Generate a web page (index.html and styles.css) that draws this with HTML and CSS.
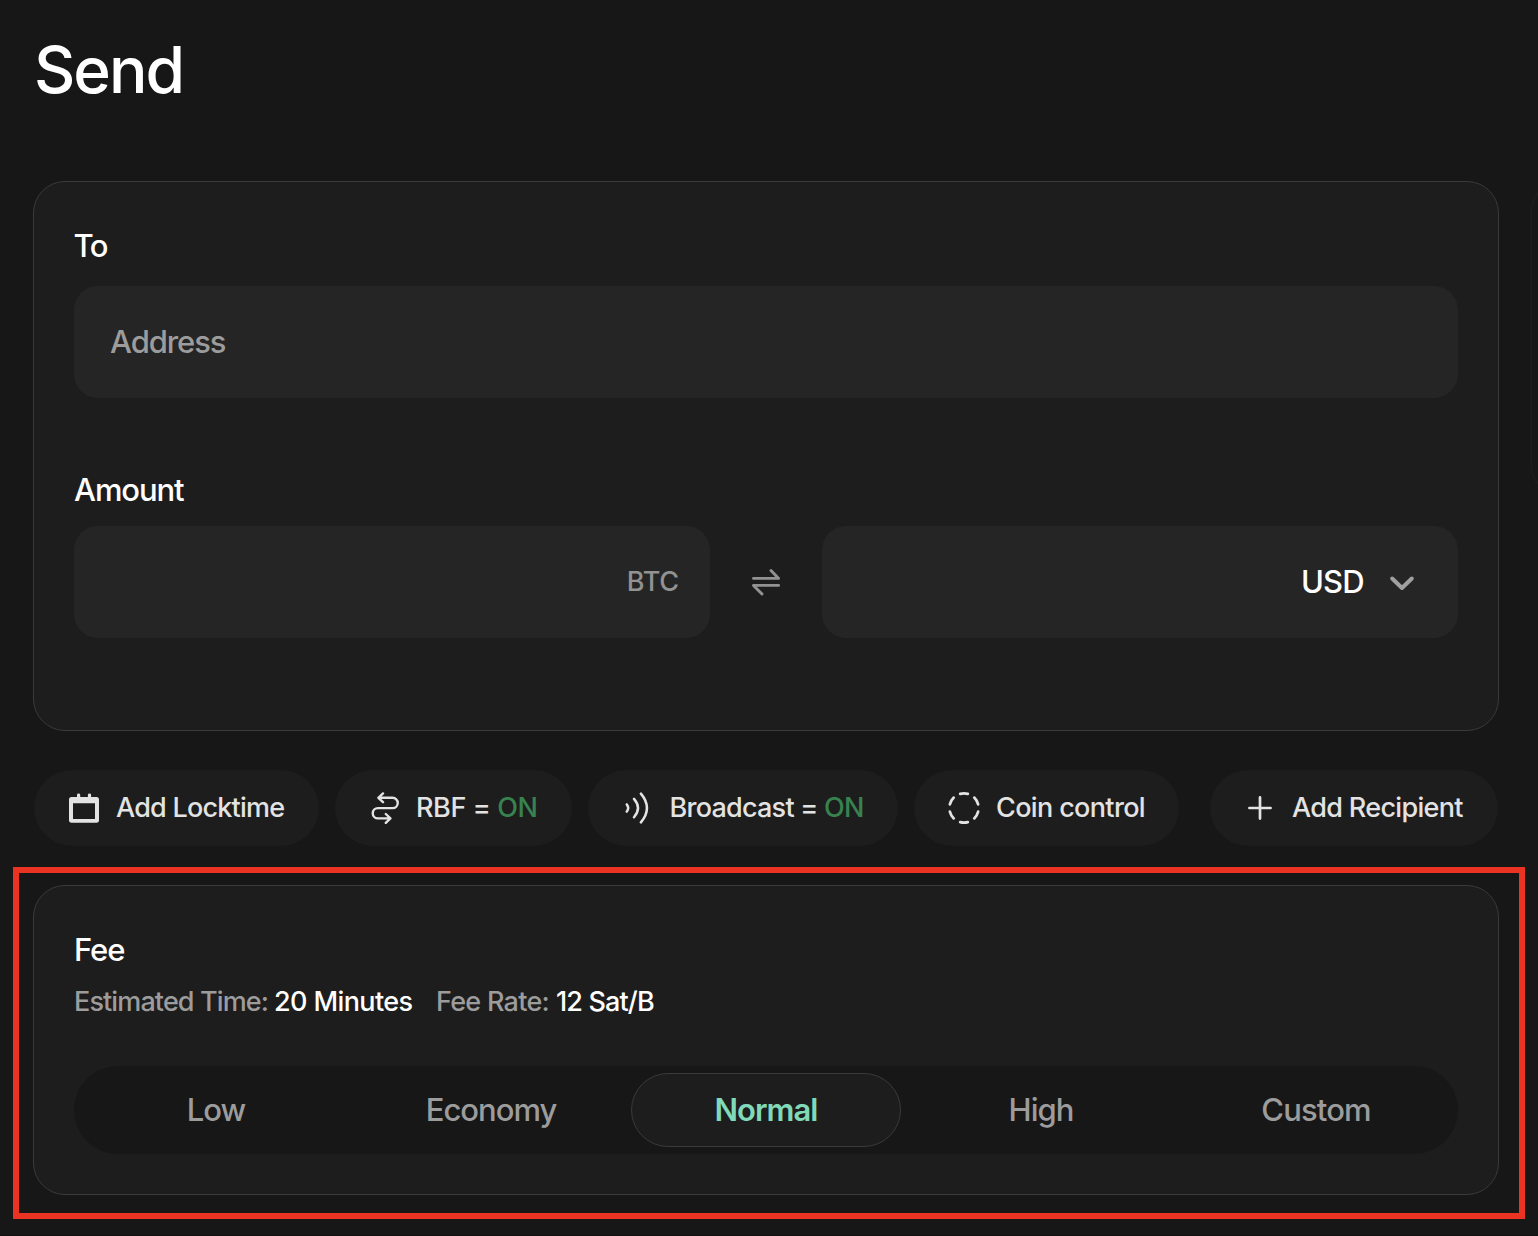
FILE: index.html
```html
<!DOCTYPE html>
<html lang="en">
<head>
<meta charset="utf-8">
<title>Send</title>
<link rel="stylesheet" href="styles.css">
</head>
<body>
<main class="page">
  <h1 class="title">Send</h1>

  <section class="card send-card">
    <label class="label label-to">To</label>
    <div class="field address"><span class="placeholder">Address</span></div>
    <label class="label label-amount">Amount</label>
    <div class="amount-row">
      <div class="field amount-btc"><span class="unit">BTC</span></div>
      <svg class="swap" width="32" height="32" viewBox="0 0 32 32" fill="none" stroke="#929292" stroke-width="2.9" stroke-linecap="round" stroke-linejoin="round"><path d="M3.5 12.4H28.6L21 4.5M28.6 19.4H3.5L12 28"/></svg>
      <div class="field amount-usd">
        <span class="currency">USD</span>
        <svg width="28" height="20" viewBox="0 0 28 20" fill="none" stroke="#a0a0a0" stroke-width="4" stroke-linecap="round" stroke-linejoin="round"><path d="M4.2 5.5L14 15L23.8 5.5"/></svg>
      </div>
    </div>
  </section>

  <div class="chips">
    <button class="chip locktime">
      <svg class="icon" viewBox="0 0 32 32" fill="#e3e3e3"><path fill-rule="evenodd" d="M3.5 5H9V2.8Q9 1.4 10.6 1.4T12.2 2.8V5H19.9V2.8Q19.9 1.4 21.5 1.4T23.1 2.8V5H28.5Q31 5 31 7.5V28Q31 30.7 28.5 30.7H3.5Q1 30.7 1 28V7.5Q1 5 3.5 5ZM5 11.2V27H27V11.2Z"/></svg>
      <span>Add Locktime</span>
    </button>
    <button class="chip rbf">
      <svg class="icon" viewBox="0 0 32 32" fill="none" stroke="#e3e3e3" stroke-width="2.4" stroke-linecap="round" stroke-linejoin="round"><path d="M14 1.4L9.4 5.8L14 10.2M9.4 5.8H23.6A5.15 5.15 0 0 1 23.6 16.1H8.9A5.15 5.15 0 0 0 8.9 26.4H21.2M16.8 22L21.4 26.4L16.8 30.8"/></svg>
      <span>RBF = <span class="on">ON</span></span>
    </button>
    <button class="chip broadcast">
      <svg class="icon" viewBox="0 0 32 32" fill="none" stroke="#e3e3e3" stroke-width="2.5" stroke-linecap="round"><path d="M4.8 12.4Q7.6 16 4.8 19.6M12 6.9Q20 16 12 25.2M18.9 1.6Q31 16 18.9 30.4"/></svg>
      <span>Broadcast = <span class="on">ON</span></span>
    </button>
    <button class="chip coin">
      <svg class="icon" viewBox="0 0 32 32" fill="none" stroke="#e3e3e3" stroke-width="2.7" stroke-linecap="round"><circle cx="16" cy="16" r="14.6" pathLength="360" stroke-dasharray="31 29" stroke-dashoffset="-14.5" /></svg>
      <span>Coin control</span>
    </button>
    <button class="chip recipient">
      <svg class="icon" viewBox="0 0 32 32" fill="none" stroke="#e3e3e3" stroke-width="2.7" stroke-linecap="round"><path d="M16 5.4V26.6M5.4 16H26.6"/></svg>
      <span>Add Recipient</span>
    </button>
  </div>

  <div class="highlight">
    <section class="card fee-card">
      <h2 class="label">Fee</h2>
      <div class="facts">
        <span class="key time-key">Estimated Time:</span><span class="value time-value">20 Minutes</span>
        <span class="key rate-key">Fee Rate:</span><span class="value rate-value">12 Sat/B</span>
      </div>
      <div class="tabs">
        <button class="tab">Low</button>
        <button class="tab">Economy</button>
        <button class="tab active">Normal</button>
        <button class="tab">High</button>
        <button class="tab custom">Custom</button>
      </div>
    </section>
  </div>
  <aside class="next-panel"></aside>
</main>
</body>
</html>
```
FILE: styles.css
```css
* { box-sizing: border-box; margin: 0; }
body { background: #171717; color: #fff; font-family: Inter, sans-serif; overflow: hidden; }
button { font: inherit; color: inherit; border: 0; background: none; padding: 0; }
.page { position: relative; width: 1538px; height: 1236px; overflow: hidden; border-bottom: 1px solid #101010; }
.title { margin: 30px 0 0 34px; height: 80px; font-size: 64px; line-height: 80px; font-weight: 530; letter-spacing: -2px; }

.card { width: 1466px; background: #1d1d1d; border: 1px solid #3a3a3a; border-radius: 32px; padding: 44px 40px 0; }
.send-card { height: 550px; margin: 71px 0 0 33px; }
.label { display: block; height: 40px; font-size: 31px; line-height: 40px; font-weight: 500; letter-spacing: -1.1px; }
.label-to { letter-spacing: -1.6px; margin-left: -0.5px; }
.field { display: flex; align-items: center; height: 112px; background: #252525; border-radius: 24px; }
.address { margin-top: 20px; padding: 0 0 2px 36px; }
.placeholder { color: #9c9c9c; font-size: 31px; font-weight: 450; letter-spacing: -1.1px; }
.label-amount { margin-top: 72px; }
.amount-row { display: flex; align-items: center; justify-content: space-between; margin-top: 16px; }
.amount-btc, .amount-usd { width: 636px; justify-content: flex-end; padding-bottom: 2px; }
.unit { padding-right: 31px; color: #929292; font-size: 27px; font-weight: 450; letter-spacing: -0.15px; }
.amount-usd { padding-right: 42px; gap: 24px; }
.currency { font-size: 31px; font-weight: 500; letter-spacing: -0.75px; }
.amount-usd svg { margin-top: 3px; }

.chips { display: flex; gap: 16px; margin: 39px 0 0 34px; }
.chip { display: flex; align-items: center; height: 76px; padding-left: 34px; gap: 16px; border-radius: 38px; background: #1d1d1d; color: #e3e3e3; font-size: 27px; font-weight: 450; line-height: 34px; letter-spacing: -0.68px; white-space: nowrap; }
.icon { width: 32px; height: 32px; flex: none; }
.locktime { width: 285px; letter-spacing: -0.77px; }
.rbf { width: 237px; gap: 15px; letter-spacing: -0.4px; }
.broadcast { width: 310px; gap: 15.5px; letter-spacing: -0.76px; }
.coin { width: 265px; letter-spacing: -0.64px; }
.recipient { width: 288px; margin-left: 15px; }
.on { color: #388250; }

.highlight { width: 1512px; height: 352px; margin: 21px 0 0 13px; padding: 12px 14px; border: 6px solid #ea3323; }
.fee-card { height: 310px; }
.facts { display: flex; align-items: center; height: 32px; margin-top: 16px; font-size: 27px; line-height: 32px; white-space: nowrap; }
.key { color: #9c9c9c; font-weight: 450; }
.time-key { width: 200px; letter-spacing: -0.88px; }
.time-value { width: 162px; letter-spacing: -0.6px; }
.rate-key { width: 120px; letter-spacing: -0.72px; }
.value { font-weight: 500; }
.rate-value { letter-spacing: -0.86px; }
.tabs { display: flex; gap: 5px; height: 88px; margin-top: 48px; padding: 7px; border-radius: 44px; background: #171717; }
.tab { width: 270px; height: 74px; padding-bottom: 2px; border-radius: 37px; color: #9c9c9c; font-size: 31px; font-weight: 450; letter-spacing: -1px; text-align: center; }
.custom { letter-spacing: -0.85px; }
.active { background: #1d1d1d; border: 1px solid #3a3a3a; color: #80d9b8; font-weight: 600; }

/* Neighbouring panel that runs off the right edge of the window */
.next-panel { position: absolute; left: 1530px; top: 181px; width: 400px; height: 315px; border: 2px solid #1c1c1c; border-radius: 32px; }
```
